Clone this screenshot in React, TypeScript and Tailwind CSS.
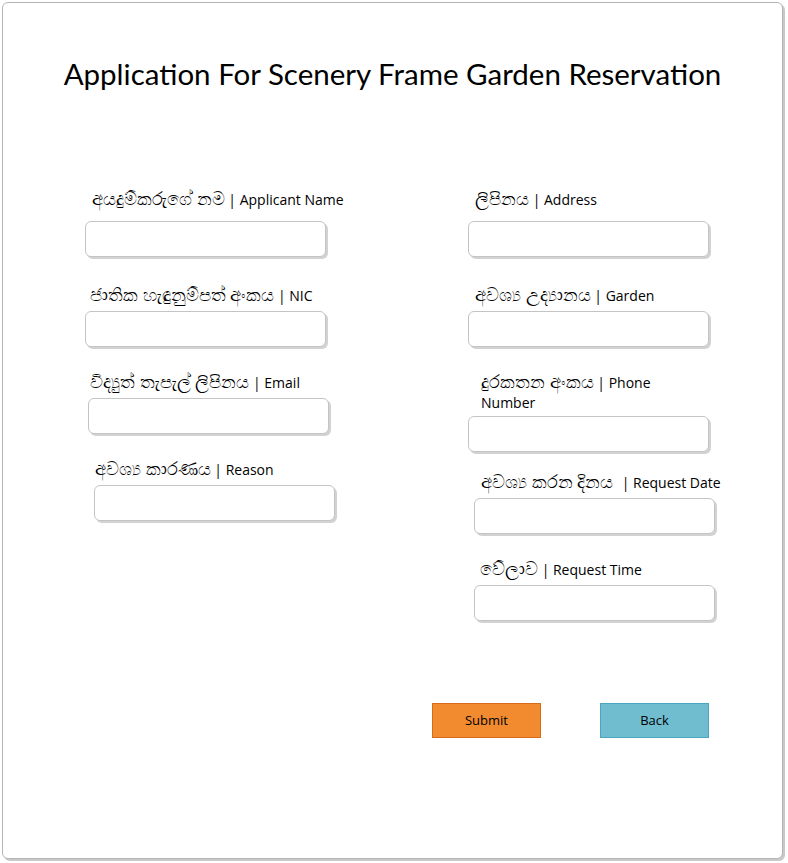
import React from 'react'

type FieldProps = {
  si: string
  en: string
  labelClass: string
  boxClass: string
}

function Field({ si, en, labelClass, boxClass }: FieldProps) {
  return (
    <div className="flex flex-col">
      <div className={`h-[20px] text-[14px] leading-[20px] text-black ${labelClass}`}>
        <span className="text-[18px] leading-[20px]">{si}</span> | {en}
      </div>
      <input
        type="text"
        className={`h-[36px] w-[241px] rounded-[6px] border border-[#c4c4c4] bg-white shadow-[2px_2px_0_#d2d2d2] outline-none ${boxClass}`}
      />
    </div>
  )
}

export default function App() {
  return (
    <div className="min-h-[863px] bg-white p-[2px] font-['Open_Sans','Noto_Sans',sans-serif]">
      <div className="h-[857px] w-[781px] rounded-[6px] border border-[#b5b5b5] bg-white shadow-[2px_2px_0_#c9c9c9]">
        {/* Title */}
        <h1 className="mt-[53px] text-center font-['Lato',sans-serif] text-[29.5px] leading-[36px] text-black">
          Application For Scenery Frame Garden Reservation
        </h1>

        {/* Form columns */}
        <div className="mt-[96px] flex">
          <div className="ml-[82px] flex w-[300px] flex-col">
            <Field si="අයදුම්කරුගේ නම" en="Applicant Name" labelClass="ml-[7px]" boxClass="mt-[13px]" />
            <div className="mt-[27px]">
              <Field si="ජාතික හැඳුනුම්පත් අංකය" en="NIC" labelClass="ml-[5px]" boxClass="mt-[7px]" />
            </div>
            <div className="mt-[24px]">
              <Field si="විද්‍යුත් තැපැල් ලිපිනය" en="Email" labelClass="ml-[5px]" boxClass="mt-[7px] ml-[3px]" />
            </div>
            <div className="mt-[24px]">
              <Field si="අවශ්‍ය කාරණය" en="Reason" labelClass="ml-[10px]" boxClass="mt-[7px] ml-[9px] w-[240px]" />
            </div>
          </div>

          <div className="ml-[83px] flex w-[300px] flex-col">
            <Field si="ලිපිනය" en="Address" labelClass="ml-[7px]" boxClass="mt-[13px]" />
            <div className="mt-[27px]">
              <Field si="අවශ්‍ය උද්‍යානය" en="Garden" labelClass="ml-[7px]" boxClass="mt-[7px]" />
            </div>
            <div className="mt-[24px]">
              <Field si="දුරකතන අංකය" en="Phone Number" labelClass="ml-[13px] !h-[40px] w-[185px]" boxClass="mt-[5px]" />
            </div>
            <div className="mt-[19px]">
              <Field si={'අවශ්‍ය කරන දිනය\u00a0'} en="Request Date" labelClass="ml-[13px]" boxClass="mt-[7px] ml-[6px]" />
            </div>
            <div className="mt-[24px]">
              <Field si="වේලාව" en="Request Time" labelClass="ml-[12px]" boxClass="mt-[7px] ml-[6px]" />
            </div>
          </div>
        </div>

        {/* Buttons */}
        <div className="mt-[82px] ml-[429px] flex gap-[59px]">
          <button className="h-[35px] w-[109px] border border-[#d46c1c] bg-[#f28a30] text-[13px] text-black">
            Submit
          </button>
          <button className="h-[35px] w-[109px] border border-[#4aa6bf] bg-[#70bdd0] text-[13px] text-black">
            Back
          </button>
        </div>
      </div>
    </div>
  )
}
